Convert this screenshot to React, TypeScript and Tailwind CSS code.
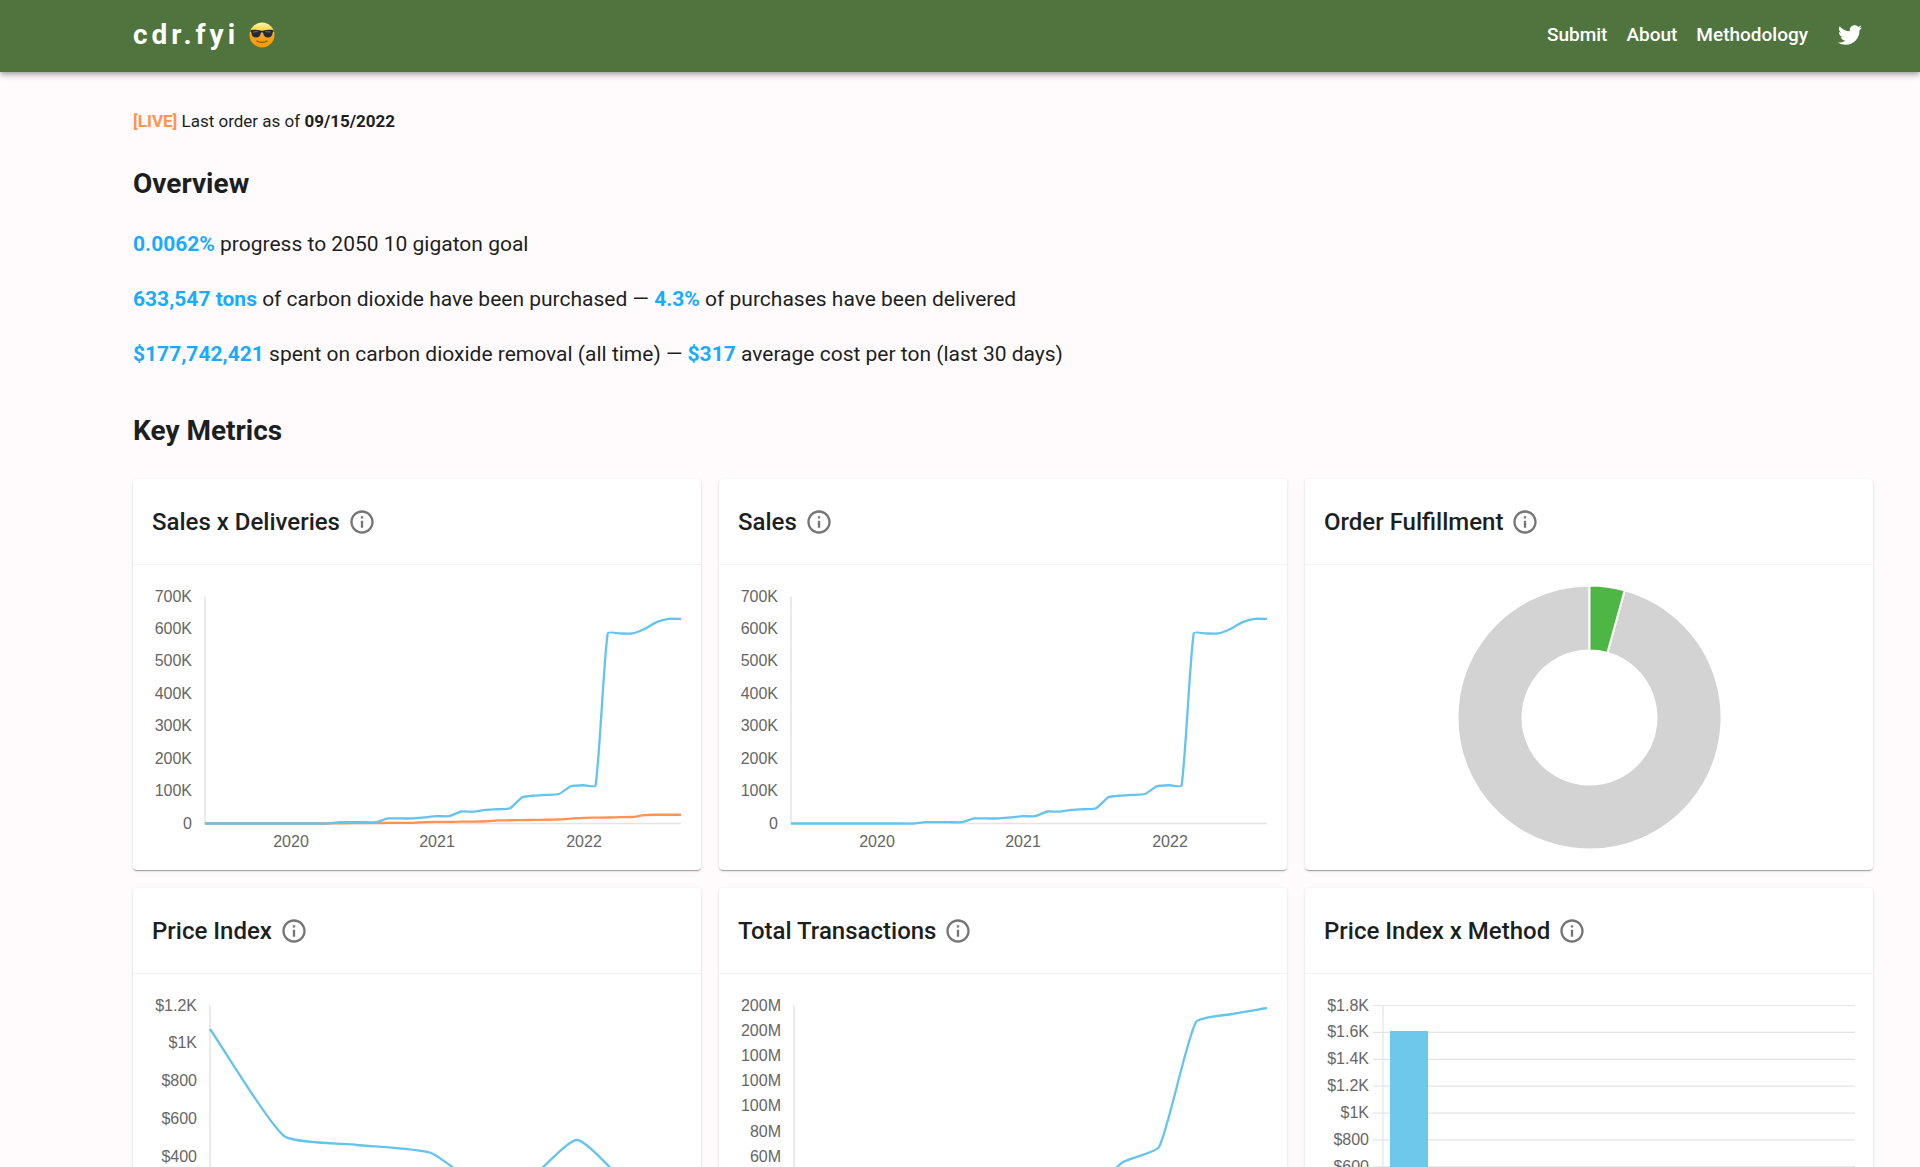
import type { ReactNode } from 'react'
import { FaTwitter } from 'react-icons/fa'
import { MdOutlineInfo } from 'react-icons/md'

type Point = [number, number]

const LINE_COLOR = '#64c4ee'
const DELIVERY_COLOR = '#ff9354'
const AXIS_COLOR = '#e4e4e4'

// plot area shared by every chart, in viewBox units
const PLOT_TOP = 31.5
const PLOT_BOTTOM = 258.5
const PLOT_RIGHT = 548

// monthly totals in thousands of tons, June 2019 to September 2022
const sales = [
  0, 0, 0, 0, 0, 0, 0, 0, 0, 0, 0, 4, 4, 4, 4, 15.5, 15.5, 15.5, 19, 22.5, 22.5, 37, 36.5, 42, 44,
  47, 81, 86, 88, 91, 115, 118, 117, 587, 586, 586, 600, 621, 631, 631,
]
const deliveries = [
  0, 0, 0, 0, 0, 0, 0, 0, 0, 0, 0, 0.5, 1, 1, 1, 2, 2, 2, 4.5, 5, 5, 5.5, 6, 7, 9.5, 10, 10.5, 11,
  11.5, 12.5, 15, 17.5, 18, 18.5, 19.5, 20, 26, 27, 27, 27,
]

const tonLabels = ['700K', '600K', '500K', '400K', '300K', '200K', '100K', '0']

// bezier path whose control points lean towards the neighbouring points
function smoothPath(pts: Point[], tension = 0.17) {
  const controls = pts.map((p, i) => {
    const prev = pts[i - 1] ?? p
    const next = pts[i + 1] ?? p
    const before = Math.hypot(p[0] - prev[0], p[1] - prev[1])
    const after = Math.hypot(next[0] - p[0], next[1] - p[1])
    const a = (tension * before) / (before + after)
    const b = (tension * after) / (before + after)
    const dx = next[0] - prev[0]
    const dy = next[1] - prev[1]
    return { from: [p[0] - a * dx, p[1] - a * dy], to: [p[0] + b * dx, p[1] + b * dy] }
  })
  let d = `M${pts[0].join()}`
  for (let i = 1; i < pts.length; i++) {
    d += `C${controls[i - 1].to.join()} ${controls[i].from.join()} ${pts[i].join()}`
  }
  return d
}

function monthlyPoints(values: number[]): Point[] {
  const left = 72
  const step = (PLOT_RIGHT - left) / (values.length - 1)
  return values.map((v, i) => [left + i * step, PLOT_BOTTOM - (v / 700) * (PLOT_BOTTOM - PLOT_TOP)])
}

function ChartFrame({ label, children }: { label: string; children: ReactNode }) {
  return (
    <svg
      viewBox="0 0 568 305"
      role="img"
      aria-label={label}
      className="block w-full font-['Liberation_Sans',Arial,sans-serif] text-base"
    >
      {children}
    </svg>
  )
}

function YLabels({ labels, x, bottom = PLOT_BOTTOM }: { labels: string[]; x: number; bottom?: number }) {
  const step = (bottom - PLOT_TOP) / (labels.length - 1)
  return (
    <g fill="#666" textAnchor="end">
      {labels.map((label, i) => (
        <text key={i} x={x} y={PLOT_TOP + i * step + 5}>
          {label}
        </text>
      ))}
    </g>
  )
}

function Axes({ left }: { left: number }) {
  return (
    <path
      d={`M${left},${PLOT_TOP}V${PLOT_BOTTOM}H${PLOT_RIGHT}`}
      fill="none"
      stroke={AXIS_COLOR}
      strokeWidth="1.5"
    />
  )
}

function Line({ points, color = LINE_COLOR }: { points: Point[]; color?: string }) {
  return <path d={smoothPath(points)} fill="none" stroke={color} strokeWidth="2.3" />
}

function YearLabels() {
  return (
    <g fill="#666" textAnchor="middle">
      <text x="158" y="282">2020</text>
      <text x="304" y="282">2021</text>
      <text x="451" y="282">2022</text>
    </g>
  )
}

function SalesChart({ withDeliveries = false }: { withDeliveries?: boolean }) {
  return (
    <ChartFrame label={withDeliveries ? 'Tons sold and delivered' : 'Tons sold'}>
      <YLabels labels={tonLabels} x={59} />
      <YearLabels />
      <Axes left={72} />
      {withDeliveries && <Line points={monthlyPoints(deliveries)} color={DELIVERY_COLOR} />}
      <Line points={monthlyPoints(sales)} />
    </ChartFrame>
  )
}

function FulfillmentChart() {
  const cx = 284.5
  const cy = 152.5
  const outer = 132
  const inner = 67
  const angle = 0.043 * 2 * Math.PI
  const sin = Math.sin(angle)
  const cos = Math.cos(angle)
  const start = `M${cx},${cy - outer}`
  const p1 = `${cx + outer * sin},${cy - outer * cos}`
  const p2 = `${cx + inner * sin},${cy - inner * cos}`
  return (
    <ChartFrame label="4.3% of orders delivered">
      <g stroke="#fff" strokeWidth="2">
        <path
          fill="#d3d3d3"
          d={`${start}A${outer},${outer} 0 1 0 ${p1}L${p2}A${inner},${inner} 0 1 1 ${cx},${cy - inner}Z`}
        />
        <path
          fill="#4eb645"
          d={`${start}A${outer},${outer} 0 0 1 ${p1}L${p2}A${inner},${inner} 0 0 0 ${cx},${cy - inner}Z`}
        />
      </g>
    </ChartFrame>
  )
}

function PriceIndexChart() {
  return (
    <ChartFrame label="Price per ton">
      <YLabels labels={['$1.2K', '$1K', '$800', '$600', '$400', '$200', '$0']} x={64} />
      <Axes left={77} />
      <Line
        points={[[77, 55], [151, 162], [224, 171], [298, 179], [371, 226], [444, 166], [517, 234], [548, 236]]}
      />
    </ChartFrame>
  )
}

function TransactionsChart() {
  return (
    <ChartFrame label="Total transactions in dollars">
      <YLabels labels={['200M', '200M', '100M', '100M', '100M', '80M', '60M', '40M', '20M', '0']} x={62} />
      <Axes left={75} />
      <Line
        points={[[75, 258], [294, 250], [368, 222], [404, 188], [440, 173], [477, 48], [513, 40], [548, 34]]}
      />
    </ChartFrame>
  )
}

function PriceMethodChart() {
  const bottom = 273.5
  const labels = ['$1.8K', '$1.6K', '$1.4K', '$1.2K', '$1K', '$800', '$600', '$400', '$200', '$0']
  const step = (bottom - PLOT_TOP) / (labels.length - 1)
  return (
    <ChartFrame label="Price per ton by method">
      <YLabels labels={labels} x={64} bottom={bottom} />
      <g stroke={AXIS_COLOR} strokeWidth="1.2">
        {labels.map((_, i) => (
          <line key={i} x1="68" x2="550" y1={PLOT_TOP + i * step} y2={PLOT_TOP + i * step} />
        ))}
        <line x1="78" x2="78" y1={PLOT_TOP} y2={bottom} />
      </g>
      <rect x="85" y="57" width="38" height={bottom - 57} fill="#6ec8ec" />
    </ChartFrame>
  )
}

function CoolFace() {
  return (
    <svg viewBox="0 0 26 26" aria-hidden="true" className="size-[26px]">
      <defs>
        <linearGradient id="face" x1="0" y1="0" x2="0" y2="1">
          <stop offset="0" stopColor="#fdf6b0" />
          <stop offset="0.25" stopColor="#fbe04a" />
          <stop offset="0.5" stopColor="#f4a61c" />
          <stop offset="1" stopColor="#f09a0c" />
        </linearGradient>
      </defs>
      <circle cx="13" cy="13" r="12.5" fill="url(#face)" />
      <path
        d="M1.5 8.2c3.5-.8 7.3-.6 9.8.2.7.3 2.7.3 3.4 0 2.5-.8 6.3-1 9.8-.2v1.6l-.9.6c-.2 3.3-1.7 5-4.6 5-2.8 0-4.2-1.5-4.9-4.5-.3-.9-1.9-.9-2.2 0-.7 3-2.1 4.5-4.9 4.5-2.9 0-4.4-1.7-4.6-5l-.9-.6z"
        fill="#262a30"
      />
      <path d="M4 10l5-.4M16.5 9.6l5 .4" stroke="#6b7078" strokeWidth="1" />
      <path d="M8 19c2.6 1.8 7.4 1.8 10 0" fill="none" stroke="#8a5208" strokeWidth="1.2" strokeLinecap="round" />
    </svg>
  )
}

function MetricCard({ title, children }: { title: string; children: ReactNode }) {
  return (
    <section className="rounded bg-white shadow-[0_2px_1px_-1px_rgba(0,0,0,0.2),0_1px_1px_0_rgba(0,0,0,0.14),0_1px_3px_0_rgba(0,0,0,0.12)]">
      <header className="flex h-[86px] items-center gap-2 border-b border-[#f2f2f2] px-[19px]">
        <h3 className="text-2xl font-medium">{title}</h3>
        <button type="button" aria-label={`About ${title}`} className="text-[#757575]">
          <MdOutlineInfo className="size-7" />
        </button>
      </header>
      {children}
    </section>
  )
}

function Figure({ children }: { children: ReactNode }) {
  return <strong className="font-bold text-[#18acff]">{children}</strong>
}

export default function App() {
  return (
    <div className="min-h-screen bg-[#fffbfc] font-[Roboto,sans-serif] text-[#1d1f1f]">
      <header className="flex h-[72px] items-center justify-between bg-[#50743d] pr-[58px] pb-0.5 pl-[133px] text-white shadow-[0_2px_4px_-1px_rgba(0,0,0,0.2),0_4px_5px_0_rgba(0,0,0,0.14),0_1px_10px_0_rgba(0,0,0,0.12)]">
        <a href="#" className="flex items-center gap-2.5 text-[28px] font-bold tracking-[4px]">
          cdr.fyi
          <CoolFace />
        </a>
        <nav className="flex items-center gap-[19px] text-[19px] font-medium">
          <a href="#submit">Submit</a>
          <a href="#about">About</a>
          <a href="#methodology">Methodology</a>
          <a href="#twitter" aria-label="Twitter" className="ml-[11px]">
            <FaTwitter className="size-6" />
          </a>
        </nav>
      </header>

      <main className="pt-[37px] pr-[47px] pb-8 pl-[133px]">
        <p className="text-[17px] leading-6">
          <span className="font-bold text-[#ff9354]">[LIVE]</span> Last order as of{' '}
          <strong className="font-bold">09/15/2022</strong>
        </p>

        <h2 className="mt-[33px] text-[28px] leading-9 font-bold">Overview</h2>
        <div className="mt-[27px] flex flex-col gap-[25px] text-[21px] leading-[30px]">
          <p>
            <Figure>0.0062%</Figure> progress to 2050 10 gigaton goal
          </p>
          <p>
            <Figure>633,547 tons</Figure> of carbon dioxide have been purchased — <Figure>4.3%</Figure> of
            purchases have been delivered
          </p>
          <p>
            <Figure>$177,742,421</Figure> spent on carbon dioxide removal (all time) — <Figure>$317</Figure>{' '}
            average cost per ton (last 30 days)
          </p>
        </div>

        <h2 className="mt-11 text-[28px] leading-9 font-bold">Key Metrics</h2>
        <div className="mt-[30px] grid grid-cols-3 gap-[18px]">
          <MetricCard title="Sales x Deliveries">
            <SalesChart withDeliveries />
          </MetricCard>
          <MetricCard title="Sales">
            <SalesChart />
          </MetricCard>
          <MetricCard title="Order Fulfillment">
            <FulfillmentChart />
          </MetricCard>
          <MetricCard title="Price Index">
            <PriceIndexChart />
          </MetricCard>
          <MetricCard title="Total Transactions">
            <TransactionsChart />
          </MetricCard>
          <MetricCard title="Price Index x Method">
            <PriceMethodChart />
          </MetricCard>
        </div>
      </main>
    </div>
  )
}
